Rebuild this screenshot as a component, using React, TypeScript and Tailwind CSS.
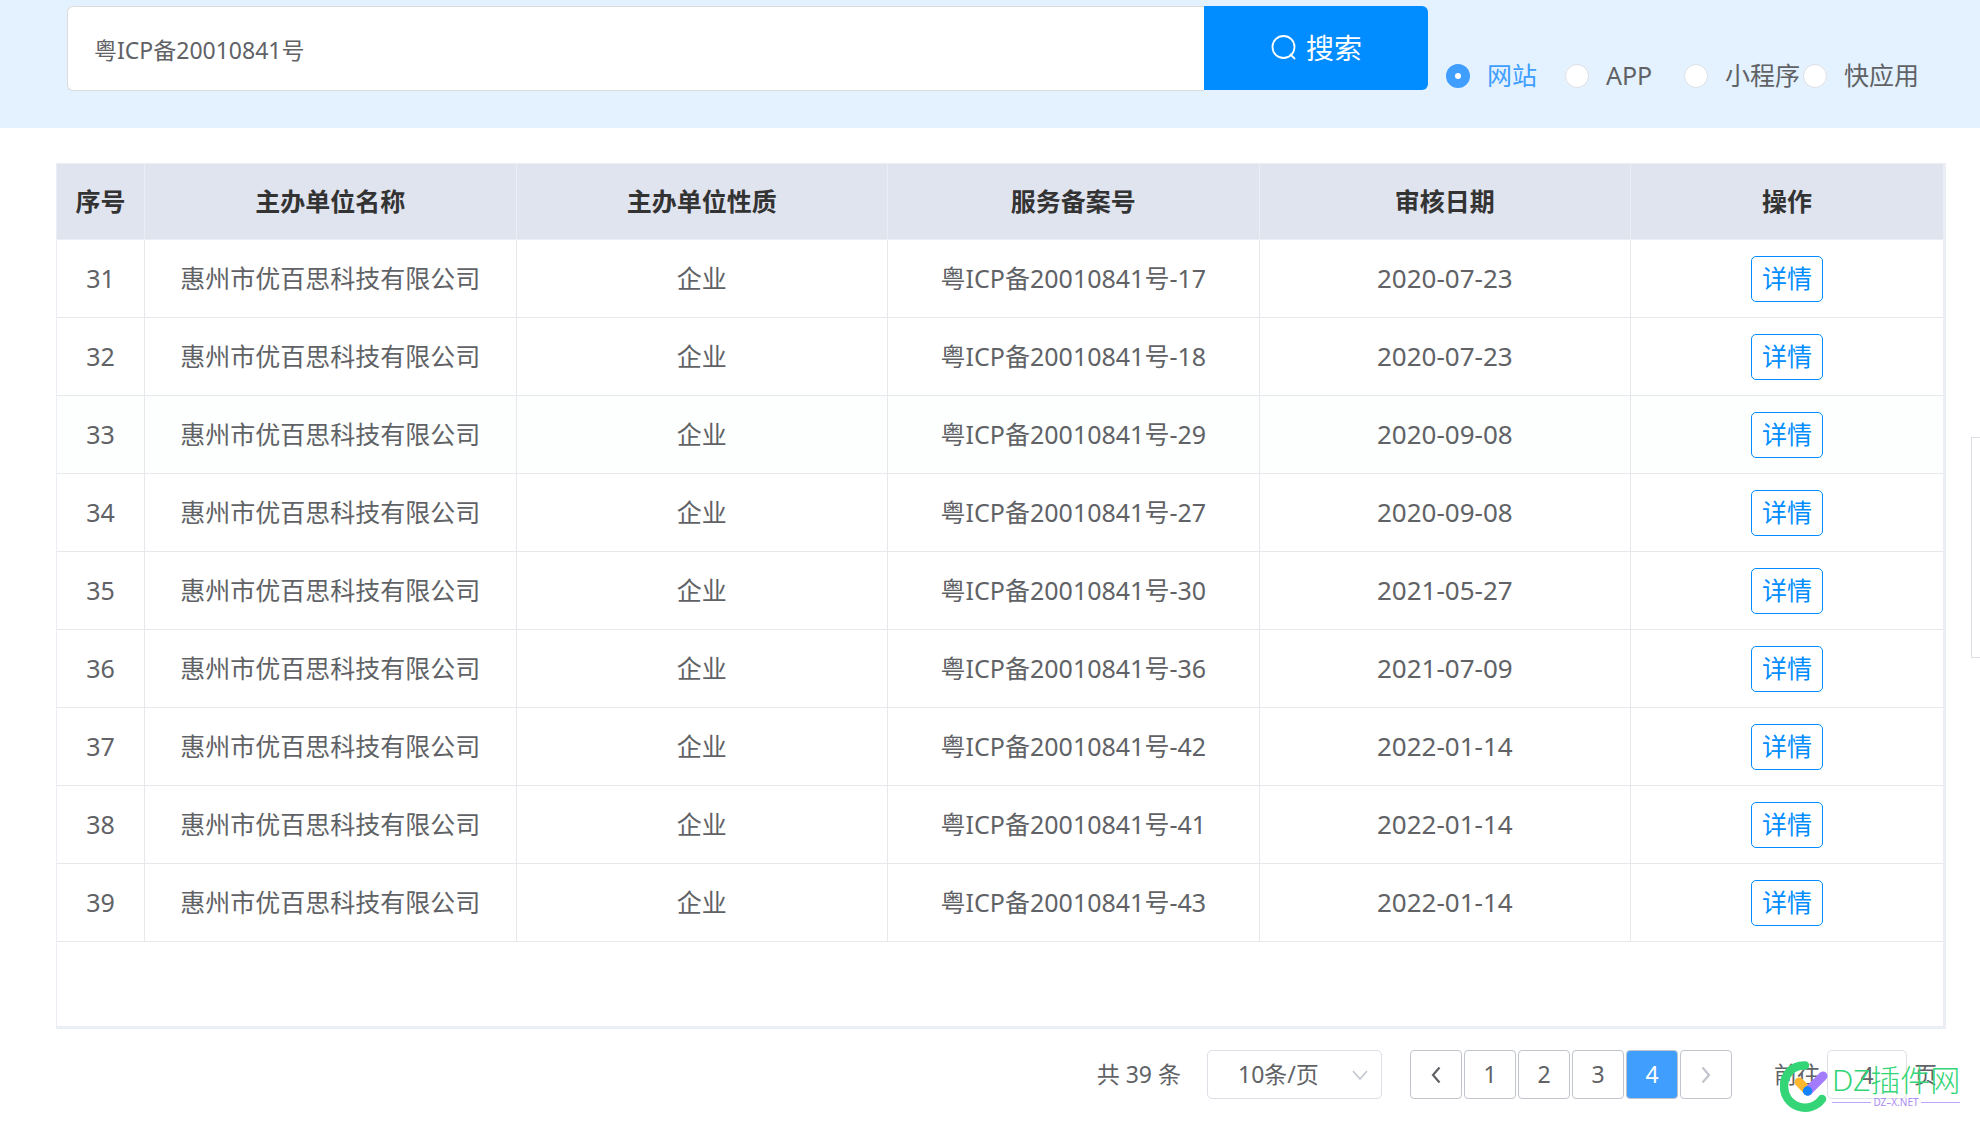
import React, { useState } from 'react';

interface IcpRecord {
  id: number;
  company: string;
  nature: string;
  license: string;
  date: string;
}

const COMPANY = '惠州市优百思科技有限公司';

const records: IcpRecord[] = [
  { id: 31, company: COMPANY, nature: '企业', license: '粤ICP备20010841号-17', date: '2020-07-23' },
  { id: 32, company: COMPANY, nature: '企业', license: '粤ICP备20010841号-18', date: '2020-07-23' },
  { id: 33, company: COMPANY, nature: '企业', license: '粤ICP备20010841号-29', date: '2020-09-08' },
  { id: 34, company: COMPANY, nature: '企业', license: '粤ICP备20010841号-27', date: '2020-09-08' },
  { id: 35, company: COMPANY, nature: '企业', license: '粤ICP备20010841号-30', date: '2021-05-27' },
  { id: 36, company: COMPANY, nature: '企业', license: '粤ICP备20010841号-36', date: '2021-07-09' },
  { id: 37, company: COMPANY, nature: '企业', license: '粤ICP备20010841号-42', date: '2022-01-14' },
  { id: 38, company: COMPANY, nature: '企业', license: '粤ICP备20010841号-41', date: '2022-01-14' },
  { id: 39, company: COMPANY, nature: '企业', license: '粤ICP备20010841号-43', date: '2022-01-14' },
];

const serviceTypes = ['网站', 'APP', '小程序', '快应用'];
const headers = ['序号', '主办单位名称', '主办单位性质', '服务备案号', '审核日期', '操作'];
const pages = [1, 2, 3, 4];

const SearchBar: React.FC = () => {
  const [keyword, setKeyword] = useState('粤ICP备20010841号');
  const [type, setType] = useState('网站');

  return (
    <header className="flex h-32 items-start bg-[#e4f2ff] pt-1.5 pl-[67px] pr-[58px]">
      <form className="flex min-w-0 flex-1" onSubmit={(e) => e.preventDefault()}>
        <input
          type="text"
          aria-label="备案号"
          value={keyword}
          onChange={(e) => setKeyword(e.target.value)}
          className="h-[85px] min-w-0 flex-1 rounded-l-md border border-r-0 border-[#dcdcdc] bg-white px-[26px] text-[23px] text-[#606266] outline-none"
        />
        <button
          type="submit"
          className="flex h-[84px] w-56 shrink-0 items-center justify-center gap-2 rounded-r-md bg-[#018dff] text-[28px] text-white"
        >
          <svg className="h-7 w-7" viewBox="0 0 28 28" fill="none" stroke="currentColor" strokeWidth="1.800">
            <circle cx="13.500" cy="13" r="11" />
            <path d="M20.500 20.500l4 4" strokeLinecap="round" />
          </svg>
          搜索
        </button>
      </form>
      <div className="ml-[18px] flex pt-[52px]">
        {serviceTypes.map((item) => (
          <label
            key={item}
            className={`flex h-9 w-[119px] items-center gap-[17px] text-[25px] whitespace-nowrap ${item === type ? 'text-[#409eff]' : 'text-[#606266]'}`}
          >
            <input
              type="radio"
              name="serviceType"
              checked={item === type}
              onChange={() => setType(item)}
              className="h-6 w-6 shrink-0 appearance-none rounded-full border border-[#dcdfe6] bg-white checked:border-[9px] checked:border-[#409eff]"
            />
            {item}
          </label>
        ))}
      </div>
    </header>
  );
};

const RecordTable: React.FC = () => (
  <div className="border-t border-r-[3px] border-b-[3px] border-l border-[#ebeef5] pb-[84px]">
    <table className="w-full table-fixed border-separate border-spacing-0 text-center text-[25px] text-[#606266]">
      <colgroup>
        <col className="w-[88px]" />
        <col className="w-[19.7%]" />
        <col className="w-[19.7%]" />
        <col className="w-[19.7%]" />
        <col className="w-[19.7%]" />
        <col />
      </colgroup>
      <thead>
        <tr>
          {headers.map((title) => (
            <th key={title} className="h-[76px] border-r border-b border-[#ebeef5] bg-[#e0e4ef] p-0 font-bold text-[#333333] last:border-r-0">
              {title}
            </th>
          ))}
        </tr>
      </thead>
      <tbody>
        {records.map((row) => (
          <tr key={row.id} className={row.id === 33 ? 'bg-[#fcfffe]' : ''}>
            <td className="h-[78px] border-r border-b border-[#e6e8eb] p-0">{row.id}</td>
            <td className="border-r border-b border-[#e6e8eb] p-0">{row.company}</td>
            <td className="border-r border-b border-[#e6e8eb] p-0">{row.nature}</td>
            <td className="border-r border-b border-[#e6e8eb] p-0">{row.license}</td>
            <td className="border-r border-b border-[#e6e8eb] p-0 text-[26px]">{row.date}</td>
            <td className="border-b border-[#e6e8eb] p-0">
              <button className="inline-flex h-[46px] w-[72px] items-center justify-center rounded-[5px] border border-[#018dff] align-middle text-[#018dff]">
                详情
              </button>
            </td>
          </tr>
        ))}
      </tbody>
    </table>
  </div>
);

const Watermark: React.FC = () => (
  <div className="pointer-events-none absolute top-8 right-[-14px] flex items-start">
    <svg className="h-[51px] w-12" viewBox="0 0 48 51" fill="none" strokeLinecap="round" strokeLinejoin="round">
      <path d="M25 4.500C11 4 4 15 4 25a21 21 0 0 0 38 13" stroke="#33d577" strokeWidth="8.500" />
      <path d="M19 21l9 9" stroke="#ffb72e" strokeWidth="9" />
      <path d="M28 30l15-15" stroke="#a27bff" strokeWidth="9" />
      <circle cx="27.500" cy="30" r="4.700" fill="#1684ff" />
    </svg>
    <div className="ml-1 w-32">
      <div className="h-9 text-[30px] leading-[38px] font-light whitespace-nowrap text-[#33d577]">DZ插件网</div>
      <div className="flex items-center gap-0.5 text-[10px] leading-[10px] text-[#a98bf5]">
        <span className="h-px flex-1 bg-[#bda6fa]" />
        DZ–X.NET
        <span className="h-px flex-1 bg-[#bda6fa]" />
      </div>
    </div>
  </div>
);

const Pagination: React.FC = () => {
  const [page, setPage] = useState(4);
  const buttonClass = 'flex h-[49px] w-[52px] items-center justify-center rounded-[4px] border border-[#c0c4cc]';

  return (
    <nav className="relative flex items-center justify-end pt-[21px] pr-[9px] text-[23px] text-[#606266]">
      <span>共 39 条</span>
      <div className="relative ml-[26px]">
        <select
          aria-label="每页条数"
          defaultValue="10"
          className="block h-[49px] w-[175px] appearance-none rounded-[5px] border border-[#dcdfe6] bg-white pl-[30px] outline-none"
        >
          <option value="10">10条/页</option>
          <option value="20">20条/页</option>
        </select>
        <svg className="pointer-events-none absolute top-[18px] right-3.5 h-3.5 w-4" viewBox="0 0 16 14" fill="none" stroke="#c0c4cc" strokeWidth="1.500">
          <path d="M1 3l7 8 7-8" />
        </svg>
      </div>
      <div className="ml-7 flex gap-0.5">
        <button aria-label="上一页" className={buttonClass} onClick={() => setPage(Math.max(1, page - 1))}>
          <svg className="h-[18px] w-3" viewBox="0 0 12 18" fill="none" stroke="currentColor" strokeWidth="2.200">
            <path d="M9.500 1.500L3 9l6.500 7.500" />
          </svg>
        </button>
        {pages.map((n) => (
          <button key={n} onClick={() => setPage(n)} className={`${buttonClass} ${n === page ? 'bg-[#409eff] text-white' : 'bg-white'}`}>
            {n}
          </button>
        ))}
        <button aria-label="下一页" className={buttonClass} disabled={page === 4} onClick={() => setPage(page + 1)}>
          <svg className="h-[18px] w-3" viewBox="0 0 12 18" fill="none" stroke="#c0c4cc" strokeWidth="2.200">
            <path d="M2.500 1.500L9 9l-6.500 7.500" />
          </svg>
        </button>
      </div>
      <label className="ml-[42px] flex items-center gap-[7px]">
        前往
        <input
          type="text"
          value={page}
          onChange={(e) => setPage(Number(e.target.value) || 1)}
          className="h-[49px] w-20 rounded-[5px] border border-[#dcdfe6] bg-white text-center outline-none"
        />
        页
      </label>
      <Watermark />
    </nav>
  );
};

export default function App() {
  return (
    <div className="min-h-screen overflow-x-hidden bg-white font-['Noto_Sans','Noto_Sans_CJK_SC',sans-serif]">
      <SearchBar />
      <main className="pt-[35px] pr-[34px] pl-14">
        <RecordTable />
        <Pagination />
      </main>
      {/* collapsed side toolbar peeking in from the right edge */}
      <aside className="fixed top-[437px] right-0 h-[221px] w-[9px] border border-r-0 border-[#dcdfe6] bg-white" />
    </div>
  );
}
